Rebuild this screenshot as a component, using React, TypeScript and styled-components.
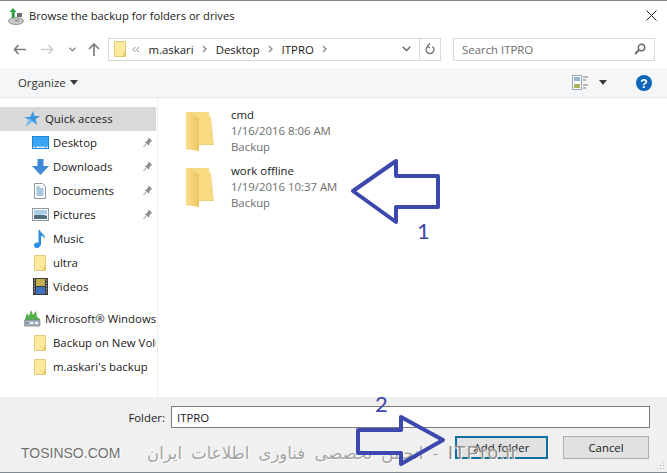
import React from "react";
import styled, { createGlobalStyle } from "styled-components";

const GlobalStyle = createGlobalStyle`
  html, body { margin: 0; padding: 0; background: #fff; }
  body { font-family: "Open Sans", "Noto Sans", sans-serif; font-size: 12px; color: #1a1a1a; }
`;

const Dialog = styled.div`
  position: relative;
  width: 667px;
  height: 473px;
  overflow: hidden;
  display: flex;
  flex-direction: column;
  background: #fff;
  border-top: 1px solid #8a8a8a;
  box-sizing: border-box;
`;

const TitleBar = styled.div`
  height: 29px;
  padding: 0 10px 0 8px;
  display: flex;
  align-items: center;
  gap: 5px;
  font-size: 11.2px;
`;

const TitleText = styled.span`
  flex: 1;
`;

const NavRow = styled.div`
  height: 38px;
  padding-left: 9px;
  box-sizing: border-box;
  display: flex;
  align-items: center;
`;

const NavButton = styled.span<{ $width: number }>`
  width: ${(p) => p.$width}px;
  display: flex;
  justify-content: center;
  align-items: center;
`;

const AddressBox = styled.div`
  width: 333px;
  height: 23px;
  box-sizing: border-box;
  border: 1px solid #d9d9d9;
  display: flex;
  align-items: center;
  padding-left: 4px;
  font-size: 11.4px;
`;

const Crumb = styled.span`
  margin-left: 5px;
  display: flex;
  align-items: center;
  gap: 8.5px;
`;

const AddressEnd = styled.div`
  margin-left: auto;
  height: 100%;
  display: flex;
  align-items: center;
`;

const RefreshCell = styled.span`
  width: 20px;
  height: 100%;
  margin-left: 8px;
  border-left: 1px solid #d9d9d9;
  display: flex;
  align-items: center;
  justify-content: center;
`;

const SearchBox = styled.div`
  width: 202px;
  height: 23px;
  margin-left: 12px;
  box-sizing: border-box;
  border: 1px solid #d9d9d9;
  display: flex;
  align-items: center;
  justify-content: space-between;
  padding: 0 8px;
  color: #6d6d6d;
  font-size: 11.4px;
`;

const Toolbar = styled.div`
  height: 30px;
  box-sizing: border-box;
  padding: 0 15px 0 18px;
  display: flex;
  align-items: center;
  background: #f5f6f7;
  border-bottom: 1px solid #e6e6e6;
  font-size: 11.4px;
  color: #333;
`;

const ToolbarRight = styled.div`
  margin-left: auto;
  display: flex;
  align-items: center;
`;

const HelpButton = styled.span`
  display: flex;
  margin-left: 18px;
`;

const Body = styled.div`
  height: 299px;
  display: flex;
`;

const Sidebar = styled.nav`
  width: 158px;
  box-sizing: border-box;
  padding-top: 9px;
  border-right: 1px solid #f0f0f0;
  overflow: hidden;
  flex-shrink: 0;
  font-size: 11.4px;
`;

const SideRow = styled.div<{ $selected?: boolean; $root?: boolean; $gapTop?: boolean }>`
  height: 24px;
  width: 156px;
  margin-top: ${(p) => (p.$gapTop ? 8 : 0)}px;
  padding: 0 0 1px ${(p) => (p.$root ? 23 : 31)}px;
  box-sizing: border-box;
  display: flex;
  align-items: center;
  background: ${(p) => (p.$selected ? "#d9d9d9" : "transparent")};
  white-space: nowrap;
  overflow: hidden;
`;

const SideIcon = styled.span`
  width: 18px;
  height: 18px;
  flex-shrink: 0;
  margin-right: 4px;
  display: flex;
  align-items: center;
  justify-content: center;
`;

const SideLabel = styled.span`
  flex: 1;
`;

const Pin = styled.span`
  display: flex;
  margin-right: 3px;
`;

const Files = styled.div`
  flex: 1;
  padding: 9px 0 0 27px;
  display: flex;
  flex-direction: column;
  gap: 8px;
`;

const FileItem = styled.div`
  display: flex;
  gap: 16px;
  align-items: center;
  height: 48px;
  font-size: 11.4px;
  line-height: 16px;
`;

const FileMeta = styled.div`
  color: #6d6d6d;
`;

const FileName = styled.div`
  color: #1a1a1a;
`;

const Footer = styled.div`
  flex: 1;
  background: #f0f0f0;
  border-bottom: 1px solid #7f8a93;
  padding: 9px 17px 0 0;
  display: flex;
  flex-direction: column;
  gap: 8px;
`;

const FolderRow = styled.div`
  display: flex;
  align-items: center;
  justify-content: flex-end;
  gap: 6px;
  font-size: 11.4px;
`;

const FolderInput = styled.div`
  width: 479px;
  height: 22px;
  box-sizing: border-box;
  border: 1px solid #7a7a7a;
  background: #fff;
  padding-left: 5px;
  display: flex;
  align-items: center;
`;

const ButtonRow = styled.div`
  display: flex;
  justify-content: flex-end;
  gap: 15px;
  padding-right: 1px;
`;

const Button = styled.div<{ $primary?: boolean }>`
  width: ${(p) => (p.$primary ? 93 : 86)}px;
  height: 23px;
  box-sizing: border-box;
  border: ${(p) => (p.$primary ? "2px solid #11709f" : "1px solid #adadad")};
  background: #e1e1e1;
  display: flex;
  align-items: center;
  justify-content: center;
  font-size: 11.4px;
`;

const Grip = styled.span`
  position: absolute;
  right: 2px;
  bottom: 3px;
  display: flex;
`;

const Watermark = styled.div`
  position: absolute;
  left: 146px;
  top: 440px;
  width: 372px;
  height: 24px;
  line-height: 24px;
  white-space: nowrap;
  color: #a3a3a3;
  font-family: "DejaVu Sans", sans-serif;
  font-size: 16.5px;
  word-spacing: 4px;
  text-shadow: 0 0 1px #fff, 1px 1px 0 #fff;
`;

const WatermarkLatin = styled.span`
  font-family: "Liberation Sans", sans-serif;
  font-size: 19px;
  letter-spacing: 1px;
  color: #8f8f8f;
`;

const Domain = styled.div`
  position: absolute;
  left: 21px;
  top: 441px;
  line-height: 22px;
  white-space: nowrap;
  font-family: "Liberation Sans", sans-serif;
  font-size: 14px;
  color: #6e6e6e;
  text-shadow: 0 0 1px #fff, 1px 1px 0 #fff;
`;

const ArrowLayer = styled.svg`
  position: absolute;
  left: 0;
  top: 0;
  pointer-events: none;
`;

const StepNumber = styled.span<{ $left: number; $top: number }>`
  position: absolute;
  left: ${(p) => p.$left}px;
  top: ${(p) => p.$top}px;
  font-family: "Lato", sans-serif;
  font-size: 22px;
  line-height: 26px;
  color: #3c48ad;
`;

const SmallFolder = () => (
  <svg width="14" height="18" viewBox="0 0 14 18">
    <path d="M1.5 1.5h11v15h-11z" fill="#fde99c" stroke="#e3cd7c" />
    <path d="M10.5 16.5v-4h2v4z" fill="#e8c65e" />
  </svg>
);

const BigFolder = () => (
  <svg width="30" height="42" viewBox="0 0 30 42">
    <defs>
      <linearGradient id="flap" x1="0" y1="0" x2="1" y2="0">
        <stop offset="0" stopColor="#f8dc8a" />
        <stop offset="1" stopColor="#eec560" />
      </linearGradient>
    </defs>
    <path d="M1 2H24V6L26 7L29 35H10Z" fill="#f8da82" />
    <path d="M1 2L14 8V41L5 39.500H1Z" fill="url(#flap)" />
    <path d="M14 34H29V35H14Z" fill="#edcf7c" />
  </svg>
);

const Chevron = ({ color = "#8a8a8a" }: { color?: string }) => (
  <svg width="5" height="8" viewBox="0 0 5 8">
    <path d="M1 1l3 3-3 3" fill="none" stroke={color} strokeWidth="1.3" />
  </svg>
);

const DownCaret = () => (
  <svg width="8" height="5" viewBox="0 0 8 5">
    <path d="M0 0h8L4 5z" fill="#3a3a3a" />
  </svg>
);

const PinIcon = () => (
  <svg width="10" height="11" viewBox="0 0 10 11">
    <path d="M5.5.5l4 3.5-1.5.6-1.8 2.3-.2 1.8L1.5 5l2-.3L5 2.5z" fill="#8e8e8e" />
    <path d="M3 7L.5 10" stroke="#8e8e8e" strokeWidth="1" />
  </svg>
);

const StarIcon = () => (
  <svg width="18" height="16" viewBox="0 0 18 16">
    <path d="M10 0l1.5 5H17l-4.300 3.300L14 14 9.500 10.500 3 15l2.500-6.500L1 6h6z" fill="#3f97dd" />
    <path d="M5.500 8.500L3 15l6.500-4.500L7 8z" fill="#7cc0ee" />
  </svg>
);

const DesktopIcon = () => (
  <svg width="17" height="13" viewBox="0 0 17 13">
    <rect width="17" height="13" fill="#1a87e0" />
    <rect x="1" y="1" width="15" height="9.500" fill="#3aa6f2" />
    <rect x="1" y="10.500" width="15" height="1.500" fill="#d7ecfb" />
    <path d="M3 11h1M13 11h1" stroke="#1a6fb8" />
  </svg>
);

const DownloadIcon = () => (
  <svg width="17" height="16" viewBox="0 0 17 16">
    <path d="M5.500 0h6v7H17l-8.500 9L0 7h5.500z" fill="#3f8ad6" />
  </svg>
);

const DocumentIcon = () => (
  <svg width="12" height="16" viewBox="0 0 12 16">
    <path d="M.5.500h8l3 3v12H.5z" fill="#fff" stroke="#8c9aa6" />
    <path d="M2.500 4h3M2.500 6h7M2.500 8h7M2.500 10h7M2.500 12h7" stroke="#4f8fb8" />
  </svg>
);

const PictureIcon = () => (
  <svg width="17" height="13" viewBox="0 0 17 13">
    <rect x=".5" y=".5" width="16" height="12" fill="#fff" stroke="#8f9aa3" />
    <rect x="2" y="2" width="13" height="5" fill="#a8cde6" />
    <rect x="2" y="7" width="13" height="4" fill="#4e6f80" />
    <path d="M2 7c4-2 8-1 13 1v-2H2z" fill="#dbe8ef" />
  </svg>
);

const MusicIcon = () => (
  <svg width="12" height="18" viewBox="0 0 12 18">
    <path d="M4.500 0h1.500c.3 3 5.500 4.500 5 9-.8-2-2.500-3-4-3.300V14c0 2.500-2.500 4-4.500 4S0 16.500 0 15s2-3 4.500-2.300z" fill="#2a8ee0" />
  </svg>
);

const VideoIcon = () => (
  <svg width="15" height="17" viewBox="0 0 15 17">
    <rect width="15" height="17" fill="#3c3c3c" />
    <rect x="3" y="1" width="9" height="7" fill="#c2b04e" />
    <rect x="3" y="9" width="9" height="7" fill="#3f73c0" />
    <path d="M1 2h1M1 5h1M1 8h1M1 11h1M1 14h1M13 2h1M13 5h1M13 8h1M13 11h1M13 14h1" stroke="#ddd" />
  </svg>
);

const BackupIcon = () => (
  <svg width="17" height="17" viewBox="0 0 17 17">
    <path d="M1 9L3 3l2 3 2-6 2 5 3-4 1 6 3 2-1 3H2z" fill="#56b04a" />
    <rect x="0" y="10" width="16" height="6" rx="1" fill="#a9b4bd" stroke="#6f7a83" strokeWidth=".7" />
    <path d="M6 12h3v2H6zM11 12h3v2h-3z" fill="#eef2f5" />
    <path d="M2 12h2v2H2z" fill="#5f8fb8" />
  </svg>
);

const TitleIcon = () => (
  <svg width="16" height="20" viewBox="0 0 16 20">
    <ellipse cx="8" cy="15" rx="7.500" ry="3.500" fill="#c9c9c9" stroke="#7d7d7d" strokeWidth=".8" />
    <ellipse cx="9" cy="14.500" rx="2.500" ry="1" fill="#8e8e8e" />
    <path d="M5 2L8.500 6H6.700v6H3.700V6H1.500z" fill="#2f9e44" />
    <rect x="9" y="7" width="5" height="4" fill="#6d6d6d" />
  </svg>
);

const sideItems: { label: string; icon: React.ReactNode; pinned?: boolean }[] = [
  { label: "Desktop", icon: <DesktopIcon />, pinned: true },
  { label: "Downloads", icon: <DownloadIcon />, pinned: true },
  { label: "Documents", icon: <DocumentIcon />, pinned: true },
  { label: "Pictures", icon: <PictureIcon />, pinned: true },
  { label: "Music", icon: <MusicIcon /> },
  { label: "ultra", icon: <SmallFolder /> },
  { label: "Videos", icon: <VideoIcon /> },
];

const files = [
  { name: "cmd", date: "1/16/2016 8:06 AM" },
  { name: "work offline", date: "1/19/2016 10:37 AM" },
];

export default function App() {
  return (
    <>
      <GlobalStyle />
      <Dialog>
        <TitleBar>
          <TitleIcon />
          <TitleText>Browse the backup for folders or drives</TitleText>
          <svg width="11" height="11" viewBox="0 0 11 11">
            <path d="M.5.500l10 10M10.500.500l-10 10" stroke="#222" strokeWidth="1" />
          </svg>
        </TitleBar>

        <NavRow>
          <NavButton $width={20}>
            <svg width="13" height="11" viewBox="0 0 13 11">
              <path d="M5.500 1L1.500 5.500l4 4.500M2 5.500h11" fill="none" stroke="#7d7d7d" strokeWidth="1.700" />
            </svg>
          </NavButton>
          <NavButton $width={37}>
            <svg width="13" height="11" viewBox="0 0 13 11">
              <path d="M7.500 1l4 4.500-4 4.500M11 5.500H0" fill="none" stroke="#d0d0d0" strokeWidth="1.700" />
            </svg>
          </NavButton>
          <NavButton $width={13}>
            <svg width="7" height="5" viewBox="0 0 7 5">
              <path d="M.5.800l3 3 3-3" fill="none" stroke="#8a8a8a" strokeWidth="1.300" />
            </svg>
          </NavButton>
          <NavButton $width={29}>
            <svg width="12" height="13" viewBox="0 0 12 13">
              <path d="M1 6l5-5 5 5M6 1.500V13" fill="none" stroke="#7d7d7d" strokeWidth="1.700" />
            </svg>
          </NavButton>
          <AddressBox>
            <SmallFolder />
            <Crumb>
              <svg width="8" height="7" viewBox="0 0 8 7">
                <path d="M3.500 1L1 3.500 3.500 6M7 1L4.500 3.500 7 6" fill="none" stroke="#8a8a8a" />
              </svg>
              <span>m.askari</span>
              <Chevron />
              <span>Desktop</span>
              <Chevron />
              <span>ITPRO</span>
              <Chevron />
            </Crumb>
            <AddressEnd>
              <svg width="9" height="6" viewBox="0 0 9 6">
                <path d="M.7.800L4.500 4.500 8.300.800" fill="none" stroke="#666" strokeWidth="1.400" />
              </svg>
              <RefreshCell>
                <svg width="10" height="12" viewBox="0 0 10 12">
                  <path d="M2.500 3.500a4 4 0 1 0 5 0M5 .5l-2.500 2.700L5 5" fill="none" stroke="#777" strokeWidth="1.400" />
                </svg>
              </RefreshCell>
            </AddressEnd>
          </AddressBox>
          <SearchBox>
            <span>Search ITPRO</span>
            <svg width="12" height="12" viewBox="0 0 12 12">
              <circle cx="7.500" cy="4.500" r="3.200" fill="none" stroke="#666" strokeWidth="1.400" />
              <path d="M5 7l-4 4" stroke="#666" strokeWidth="1.800" />
            </svg>
          </SearchBox>
        </NavRow>

        <Toolbar>
          <span>Organize</span>
          <NavButton $width={16}>
            <DownCaret />
          </NavButton>
          <ToolbarRight>
            <svg width="16" height="15" viewBox="0 0 16 15">
              <rect x=".5" y=".5" width="9" height="14" fill="#fff" stroke="#9aa5ad" />
              <rect x="2" y="2" width="6" height="4" fill="#8fb5d6" />
              <rect x="2" y="9" width="6" height="4" fill="#a8b45a" />
              <path d="M11 2h5M11 5h3M11 10h5M11 13h3" stroke="#777" />
            </svg>
            <NavButton $width={30}>
              <DownCaret />
            </NavButton>
            <HelpButton>
              <svg width="16" height="16" viewBox="0 0 16 16">
                <circle cx="8" cy="8" r="8" fill="#0f66b8" />
                <text x="8" y="12.500" textAnchor="middle" fontSize="12" fontWeight="700" fontFamily="Liberation Sans" fill="#fff">?</text>
              </svg>
            </HelpButton>
          </ToolbarRight>
        </Toolbar>

        <Body>
          <Sidebar>
            <SideRow $selected $root>
              <SideIcon><StarIcon /></SideIcon>
              <SideLabel>Quick access</SideLabel>
            </SideRow>
            {sideItems.map((item) => (
              <SideRow key={item.label}>
                <SideIcon>{item.icon}</SideIcon>
                <SideLabel>{item.label}</SideLabel>
                {item.pinned && <Pin><PinIcon /></Pin>}
              </SideRow>
            ))}
            <SideRow $root $gapTop>
              <SideIcon><BackupIcon /></SideIcon>
              <SideLabel>Microsoft® Windows Backup</SideLabel>
            </SideRow>
            <SideRow>
              <SideIcon><SmallFolder /></SideIcon>
              <SideLabel>Backup on New Volume</SideLabel>
            </SideRow>
            <SideRow>
              <SideIcon><SmallFolder /></SideIcon>
              <SideLabel>m.askari's backup</SideLabel>
            </SideRow>
          </Sidebar>

          <Files>
            {files.map((f) => (
              <FileItem key={f.name}>
                <BigFolder />
                <div>
                  <FileName>{f.name}</FileName>
                  <FileMeta>{f.date}</FileMeta>
                  <FileMeta>Backup</FileMeta>
                </div>
              </FileItem>
            ))}
          </Files>
        </Body>

        <Footer>
          <FolderRow>
            <span>Folder:</span>
            <FolderInput>ITPRO</FolderInput>
          </FolderRow>
          <ButtonRow>
            <Button $primary>Add folder</Button>
            <Button>Cancel</Button>
          </ButtonRow>
        </Footer>

        <Grip>
          <svg width="9" height="9" viewBox="0 0 9 9">
            <path d="M7 1h1v1H7zM4 4h1v1H4zM7 4h1v1H7zM1 7h1v1H1zM4 7h1v1H4zM7 7h1v1H7z" fill="#b5b5b5" />
          </svg>
        </Grip>

        <Domain>TOSINSO.COM</Domain>
        <Watermark dir="rtl">
          <WatermarkLatin>ITPro.ir</WatermarkLatin> - انجمن تخصصی فناوری اطلاعات ایران
        </Watermark>

        <ArrowLayer width="667" height="473" viewBox="0 0 667 473">
          <path d="M353 190L396 160V175H438V206H396V221Z" fill="none" stroke="#3c48ad" strokeWidth="4" strokeLinejoin="round" />
          <path d="M358 429H401V416L443 439L401 463V452H358Z" fill="none" stroke="#3c48ad" strokeWidth="4" strokeLinejoin="round" />
        </ArrowLayer>
        <StepNumber $left={417} $top={217}>1</StepNumber>
        <StepNumber $left={375} $top={390}>2</StepNumber>
      </Dialog>
    </>
  );
}
